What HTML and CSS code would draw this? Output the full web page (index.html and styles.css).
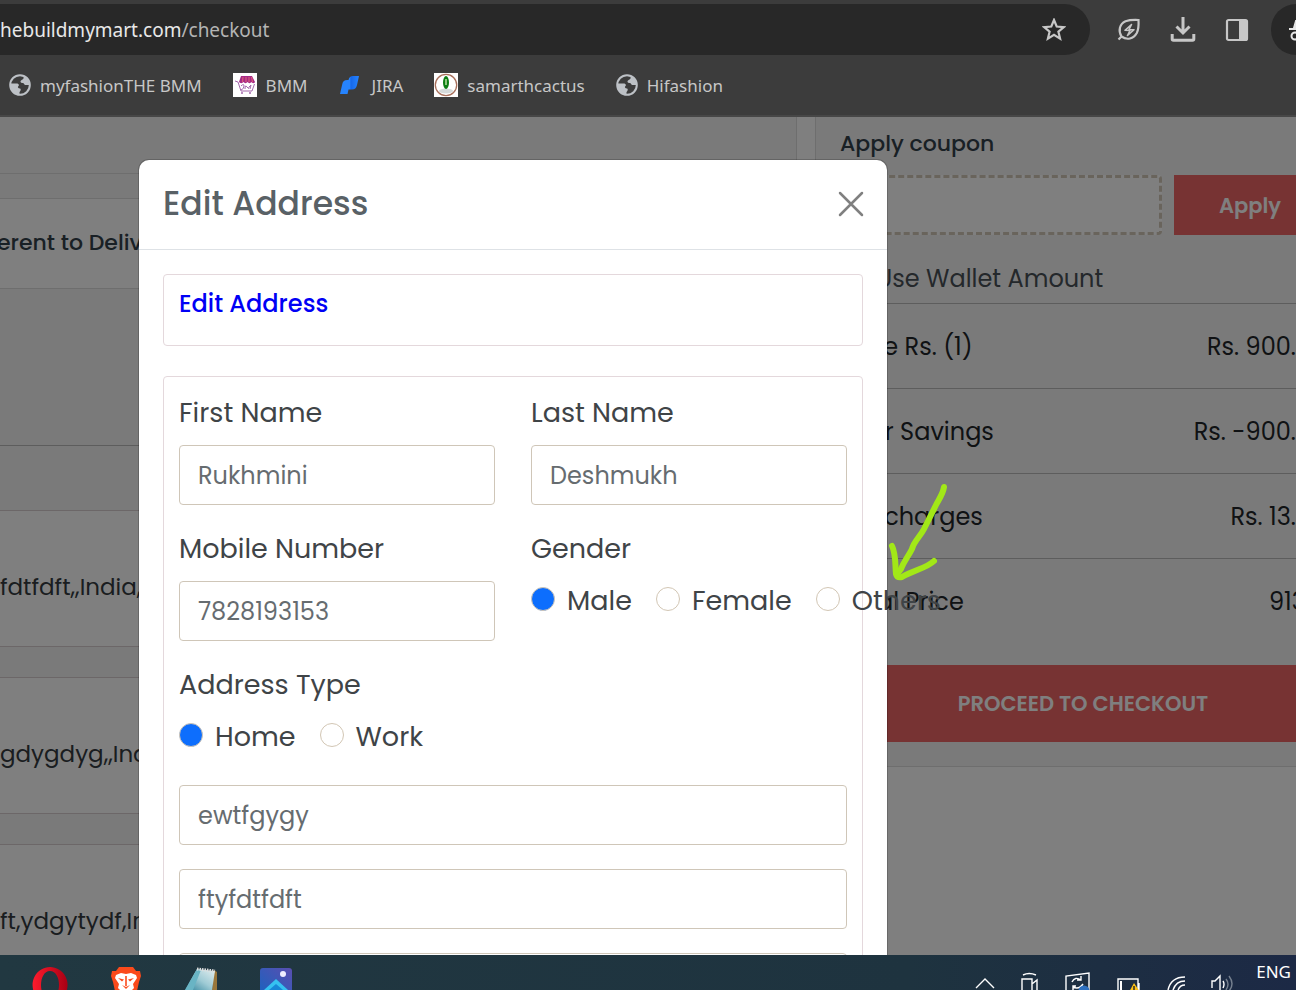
FILE: index.html
```html
<!DOCTYPE html>
<html lang="en">
<head>
  <meta charset="UTF-8">
  <meta name="viewport" content="width=device-width, initial-scale=1.0">
  <title>Checkout</title>
  <link rel="stylesheet" href="styles.css">
</head>
<body>
  <header class="browser">
    <div class="toolbar">
      <div class="omnibox">
        <span class="url">hebuildmymart.com<span class="path">/checkout</span></span>
        <button class="icon-btn" aria-label="Bookmark this page">
          <svg width="24" height="24" viewBox="0 0 24 24" fill="none" stroke="#c7c7c7" stroke-width="2.2"><path d="M12 2l2.700 6.500 7.100.6-5.400 4.600 1.700 6.900-6.100-3.700-6.100 3.700 1.700-6.900L2.200 9.100l7.100-.6z"/></svg>
        </button>
      </div>
      <div class="tools">
        <button class="icon-btn" aria-label="Energy saver">
          <svg width="24" height="24" viewBox="0 0 24 24" fill="none" stroke="#c7c7c7" stroke-width="2.200"><path d="M1.500 21.500L4.500 18.500C1 13 2.500 6 8.500 3.300c4-1.500 8.500-1.500 13-1.300.3 5 .3 9-1.700 13C16.500 21 10 22.500 4.500 18.500"/><path d="M14.500 6.500l-6.500 5.800 5 .2-2.500 5 6.500-5.800-5-.2z" stroke-width="1.600" stroke-linejoin="round"/></svg>
        </button>
        <button class="icon-btn" aria-label="Downloads">
          <svg width="26" height="26" viewBox="0 0 26 26" fill="none" stroke="#c7c7c7" stroke-width="3"><path d="M13 0v15M6.500 9.500L13 16l6.500-6.500M2.200 17v5q0 1.200 1.200 1.200h19.200q1.200 0 1.200-1.200v-5"/></svg>
        </button>
        <button class="icon-btn" aria-label="Side panel">
          <svg width="24" height="24" viewBox="0 0 24 24"><rect x="2" y="2" width="20" height="20" rx="1.500" fill="none" stroke="#c7c7c7" stroke-width="2.200"/><path d="M14 2h8v20h-8z" fill="#c7c7c7"/></svg>
        </button>
      </div>
      <div class="profile">
        <svg width="24" height="24" viewBox="0 0 24 24" fill="none" stroke="#e8e8e8" stroke-width="2"><path d="M0 11h24"/><path d="M5 10l2-7h10l2 7z" fill="#e8e8e8"/><circle cx="6" cy="18" r="3.500"/><circle cx="18" cy="18" r="3.500"/><path d="M9.500 17h5"/></svg>
      </div>
    </div>
    <nav class="bookmarks">
      <a href="#">
        <svg width="22" height="22" viewBox="0 0 22 22"><circle cx="11" cy="11" r="9.800" fill="none" stroke="#bdc1c6" stroke-width="2"/><path d="M14 2c4 1.200 6.500 5 6.500 9h-3.800c-2 0-1.200-2-3.200-2-2.200 0-2.500-1.500-1.500-2.400C13 5.500 16 5 14 2zM1.500 9.500h7c1.800.8 1.800 2 .8 2.700-1 .8-.3 2 1.700 2.300 1.400.3.500 3-.5 3.500V21C5 21 1 16 1.500 9.500z" fill="#bdc1c6"/></svg>
        myfashionTHE BMM
      </a>
      <a href="#">
        <svg width="24" height="24" viewBox="0 0 24 24"><path fill="#fff" d="M0 0h24v24H0z"/><path d="M8 3h11l3 6c-1 2-3 1-3.500 0-1 1.500-3 1.500-4 0-1 1.500-3 1.500-4 0-1 1.500-3.500 1.500-4.500 0z" fill="#a62a86"/><path d="M10 4l-.5 5M13 4v5M16 4v5M18.500 4l1 5" stroke="#d95c78" stroke-width="1.200"/><path d="M2 8l3 1 3 9h11l2.500-7M8 13q3-3 3 0t-3 4M12 16q0-5 2-2t2 0l2-2-1 4" fill="none" stroke="#a468ad" stroke-width="1"/><circle cx="9" cy="20" r="1" fill="#a468ad"/><circle cx="17" cy="20" r="1" fill="#a468ad"/></svg>
        BMM
      </a>
      <a href="#">
        <svg width="24" height="24" viewBox="0 0 24 24"><defs><linearGradient id="jira" x1="0" x2="1"><stop offset="0" stop-color="#2684ff"/><stop offset=".5" stop-color="#2684ff"/><stop offset=".58" stop-color="#1668ea"/><stop offset="1" stop-color="#2684ff"/></linearGradient></defs><path d="M2 21l2.300-10q.7-4 5-4h1.200q.8-4 4.500-4h6l-2 9q-1 4.500-5 4.500h-3.500l-1 4.500z" fill="url(#jira)"/></svg>
        JIRA
      </a>
      <a href="#">
        <svg width="24" height="24" viewBox="0 0 24 24"><path fill="#fff" d="M0 0h24v24H0z"/><circle cx="12" cy="12" r="10.700" fill="none" stroke="#a8705c" stroke-width="1.300"/><ellipse cx="12" cy="18" rx="7" ry="2.500" fill="#d5dada"/><ellipse cx="12" cy="9.500" rx="3" ry="6.500" fill="#0b7d12"/><path d="M12 6v6" stroke="#b8e0a0" stroke-width="1.500"/></svg>
        samarthcactus
      </a>
      <a href="#">
        <svg width="22" height="22" viewBox="0 0 22 22"><circle cx="11" cy="11" r="9.800" fill="none" stroke="#bdc1c6" stroke-width="2"/><path d="M14 2c4 1.200 6.500 5 6.500 9h-3.800c-2 0-1.200-2-3.200-2-2.200 0-2.500-1.500-1.500-2.400C13 5.500 16 5 14 2zM1.500 9.500h7c1.800.8 1.800 2 .8 2.700-1 .8-.3 2 1.700 2.300 1.400.3.500 3-.5 3.500V21C5 21 1 16 1.500 9.500z" fill="#bdc1c6"/></svg>
        Hifashion
      </a>
    </nav>
  </header>

  <main class="viewport">
    <div class="checkout">
      <section class="left">
        <div class="strip"></div>
        <div class="deliver"><h2>erent to Deliv</h2></div>
        <div class="tabs"></div>
        <div class="spacer"></div>
        <div class="address">fdtfdft,,India,</div>
        <div class="address">gdygdyg,,Ind</div>
        <div class="address">ft,ydgytydf,In</div>
      </section>

      <aside class="summary">
        <label class="coupon-label" for="coupon">Apply coupon</label>
        <div class="coupon">
          <input type="text" id="coupon">
          <button>Apply</button>
        </div>
        <div class="wallet">Use Wallet Amount</div>
        <dl>
          <div><dt>Price Rs. (1)</dt><dd>Rs. 900.00</dd></div>
          <div><dt>Your Savings</dt><dd>Rs. -900.00</dd></div>
          <div><dt>Del charges</dt><dd>Rs. 13.00</dd></div>
          <div><dt>Total Price</dt><dd>913.5</dd></div>
        </dl>
        <button class="proceed">PROCEED TO CHECKOUT</button>
      </aside>
    </div>

    <div class="backdrop"></div>

    <div class="modal" role="dialog" aria-labelledby="modalTitle">
      <div class="modal-header">
        <h1 id="modalTitle">Edit Address</h1>
        <button class="close" aria-label="Close">
          <svg width="26" height="26" viewBox="0 0 26 26" stroke="#808080" stroke-width="2.500" stroke-linecap="round"><path d="M2 2l22 22M24 2L2 24"/></svg>
        </button>
      </div>
      <div class="modal-body">
        <div class="box box-title"><a href="#">Edit Address</a></div>
        <form class="box box-form">
          <div class="grid">
            <div class="field">
              <label for="first">First Name</label>
              <input type="text" id="first" value="Rukhmini">
            </div>
            <div class="field">
              <label for="last">Last Name</label>
              <input type="text" id="last" value="Deshmukh">
            </div>
            <div class="field">
              <label for="mobile">Mobile Number</label>
              <input type="text" id="mobile" value="7828193153">
            </div>
            <div class="field" role="radiogroup" aria-labelledby="genderLabel">
              <span class="label" id="genderLabel">Gender</span>
              <div class="radios">
                <label><input type="radio" name="gender" checked>Male</label>
                <label><input type="radio" name="gender">Female</label>
                <label><input type="radio" name="gender">Others</label>
              </div>
            </div>
            <div class="field" role="radiogroup" aria-labelledby="typeLabel">
              <span class="label" id="typeLabel">Address Type</span>
              <div class="radios">
                <label><input type="radio" name="type" checked>Home</label>
                <label><input type="radio" name="type">Work</label>
              </div>
            </div>
          </div>
          <div class="lines">
            <input type="text" aria-label="Address line 1" value="ewtfgygy">
            <input type="text" aria-label="Address line 2" value="ftyfdtfdft">
            <input type="text" aria-label="Landmark">
          </div>
        </form>
      </div>
    </div>

    <svg class="arrow" width="70" height="106" viewBox="0 0 70 106" fill="none" stroke="#a2e817" stroke-width="6" stroke-linecap="round" stroke-linejoin="round"><path d="M60 6c-1 7-5 12-8 18L40 48c-4 8-10 12-12 20-4 8-8 12-11 20l-3 4"/><path d="M8 65c4 8 3 18 4 28q1 4 6 3c12-7 25-9 32-16"/></svg>
  </main>

  <footer class="taskbar">
    <div class="apps">
      <svg width="36" height="23" viewBox="0 0 36 23"><defs><linearGradient id="opera" x1="0" x2="1"><stop offset="0" stop-color="#ff1b2d"/><stop offset="1" stop-color="#a70014"/></linearGradient></defs><path fill-rule="evenodd" fill="url(#opera)" d="M18 0a17.500 18 0 1 0 .1 0zM18 4c6 0 9 7 9 14s-3 14-9 14-9-7-9-14 3-14 9-14z"/></svg>
      <svg width="32" height="23" viewBox="0 0 32 23"><path d="M9 0h14l3 4 4 0 1 5-2 6-2 9H5L3 15 1 9l1-5 4 0z" fill="#fb4a1b"/><path d="M6 8l5-2 5 1 5-1 5 2 1 3-4 6 1 4-4 4h-8l-4-4 1-4-4-6z" fill="#fff"/><path d="M8 11l6 1.500-2 2zM24 11l-6 1.500 2 2zM12 18l4 2 4-2-4 4zM15.200 9h1.600v10h-1.600z" fill="#fb4a1b"/></svg>
      <svg width="34" height="23" viewBox="0 0 34 23"><defs><linearGradient id="note" x1="0" y1="1" x2="1" y2="0"><stop offset="0" stop-color="#2c8199"/><stop offset=".5" stop-color="#9fcbd5"/><stop offset="1" stop-color="#e4eeef"/></linearGradient></defs><path d="M30 3l3 2v18h-5z" fill="#99763a"/><path d="M13 2l18 2-3 19H1z" fill="url(#note)"/><path d="M13 2L1 23h8l8-20z" fill="#69b4c4"/><path d="M13 2l18 2" stroke="#ddd" stroke-width="3" stroke-dasharray="1.500 1"/></svg>
      <svg width="32" height="23" viewBox="0 0 32 23"><defs><linearGradient id="photo" x1="0" y1="1" x2="1" y2="0"><stop offset="0" stop-color="#1764c0"/><stop offset="1" stop-color="#5a4eb0"/></linearGradient></defs><rect y="1" width="32" height="30" rx="3" fill="url(#photo)"/><circle cx="23" cy="7" r="3" fill="#eef"/><path d="M4 23l12-11 12 11z" fill="#35c1f1"/><path d="M9 23l7-6 7 6z" fill="#1787d8"/></svg>
    </div>
    <div class="tray">
      <svg width="20" height="23" viewBox="0 0 20 23" fill="none" stroke="#fff" stroke-width="1.400"><path d="M1 21l9-9 9 9"/></svg>
      <svg width="18" height="23" viewBox="0 0 18 23" fill="none" stroke="#fff" stroke-width="1.400"><path d="M2 8q6-3 13 0M1 25V12h10v14M11 17l5-4v12"/></svg>
      <svg width="26" height="23" viewBox="0 0 26 23" fill="none" stroke="#fff" stroke-width="1.400"><path d="M1 24V9l23-3v18M7 15q3-6 9-2M16 9v4h-4M18 17q-4 6-10 3M8 23v-4h3"/><circle cx="19" cy="24" r="5.500" fill="#2d70c0" stroke="none"/></svg>
      <svg width="24" height="23" viewBox="0 0 24 23" fill="none" stroke="#fff" stroke-width="1.400"><path d="M1 24V12h20v13M22 16v7"/><path d="M3 14h2v10H3z" fill="#fff" stroke="none"/><path d="M17 16l6 9H12z" fill="#fdc116" stroke="none"/><path d="M17 19v4" stroke="#222"/></svg>
      <svg width="18" height="23" viewBox="0 0 18 23" fill="none" stroke="#fff" stroke-width="1.400"><path d="M1 23Q4 10 18 10M6 23q3-9 12-9M11 23q2-5 7-5"/></svg>
      <svg width="24" height="23" viewBox="0 0 24 23" fill="none" stroke="#fff" stroke-width="1.400"><path d="M1 21v-7h3l5-5v15M12 14q2 3 0 7"/><path d="M15 12q4 5 0 11M18 9q6 8 0 15" stroke="#76808f"/></svg>
      <span class="lang">ENG</span>
    </div>
  </footer>
</body>
</html>
```
FILE: styles.css
```css
* {
  box-sizing: border-box;
}

body {
  margin: 0;
  height: 100vh;
  display: flex;
  flex-direction: column;
  overflow: hidden;
  font-family: Poppins, Inter, sans-serif;
  color: #212529;
}

button, input {
  font-family: inherit;
}

a {
  text-decoration: none;
}

svg {
  display: block;
  flex-shrink: 0;
}

/* browser chrome */
.browser {
  height: 117px;
  padding-top: 4px;
  background: #3c3c3c;
  border-bottom: 2px solid #474747;
  font-family: "Segoe UI", "Noto Sans", sans-serif;
  flex-shrink: 0;
}

.toolbar {
  display: flex;
  height: 51px;
}

.omnibox {
  flex: 1;
  display: flex;
  align-items: center;
  justify-content: space-between;
  padding-right: 24px;
  background: #282828;
  border-radius: 0 26px 26px 0;
}

.url {
  font-size: 19px;
  color: #e8e8e8;
}

.path {
  color: #b4b4b4;
}

.icon-btn {
  width: 24px;
  padding: 0;
  border: none;
  background: none;
  display: flex;
  justify-content: center;
}

.tools {
  display: flex;
  align-items: center;
  gap: 30px;
  padding: 0 22px 0 27px;
}

.profile {
  width: 25px;
  padding-left: 18px;
  display: flex;
  align-items: center;
  overflow: hidden;
  background: #282828;
  border-radius: 26px 0 0 26px;
}

.bookmarks {
  display: flex;
  align-items: center;
  gap: 31px;
  height: 60px;
  padding-left: 9px;
}

.bookmarks a {
  display: flex;
  align-items: center;
  gap: 9px;
  font-size: 17px;
  color: #c7c7c7;
}

/* checkout page */
.viewport {
  flex: 1;
  position: relative;
  overflow: hidden;
  background: #fff;
}

.checkout {
  display: grid;
  grid-template-columns: minmax(0, 1fr) 536px;
  gap: 18px;
  align-items: start;
  margin-right: -55px;
}

.left {
  background: #f5f5f5;
  border-right: 1px solid #dcdcdc;
}

.strip {
  height: 57px;
  border-bottom: 1px solid #dcdcdc;
  margin-bottom: 24px;
}

.deliver {
  height: 91px;
  display: flex;
  align-items: center;
  background: #fff;
  border-top: 1px solid #dcdcdc;
  border-bottom: 1px solid #dcdcdc;
}

.deliver h2 {
  margin: 0 0 2px -3px;
  font-size: 22px;
  font-weight: 500;
  color: #33414a;
}

.tabs {
  height: 157px;
  border-bottom: 1px solid #bbb;
}

.spacer {
  height: 64px;
}

.address {
  height: 137px;
  margin-bottom: 30px;
  padding-top: 59px;
  background: #fff;
  border-top: 1px solid #d9cfd1;
  border-bottom: 1px solid #d9cfd1;
  font-size: 23px;
  line-height: 34px;
  color: #343a40;
}

.summary {
  padding: 9px 25px 24px 24px;
  background: #f5f5f5;
  border-left: 1px solid #dcdcdc;
  border-bottom: 1px solid #dcdcdc;
}

.coupon-label {
  display: block;
  font-size: 22px;
  line-height: 36px;
  font-weight: 500;
  color: #33414a;
}

.coupon {
  display: flex;
  gap: 12px;
  margin-top: 13px;
}

.coupon input {
  flex: 1;
  min-width: 0;
  height: 60px;
  background: #fff;
  border: 3px dashed #d2c8b8;
  border-radius: 4px;
}

.coupon button {
  width: 152px;
  border: none;
  background: #ee6666;
  color: #fff;
  font-size: 21px;
  font-weight: 600;
}

.wallet {
  height: 68px;
  padding-top: 27px;
  padding-left: 36px;
  font-size: 24px;
  line-height: 34px;
  color: #495057;
}

dl {
  margin: 0;
}

dl div {
  display: flex;
  justify-content: space-between;
  align-items: center;
  height: 85px;
  border-top: 1px solid #bbb;
  font-size: 24px;
}

dd {
  margin: 0;
}

.proceed {
  width: 100%;
  height: 77px;
  margin-top: 22px;
  border: none;
  background: #ee6666;
  color: #fff;
  font-size: 21px;
  font-weight: 600;
}

.backdrop {
  position: absolute;
  inset: 0;
  background: rgba(0, 0, 0, 0.5);
}

/* edit address modal */
.modal {
  position: absolute;
  top: 43px;
  left: 139px;
  width: 748px;
  background: #fff;
  border-radius: 10px;
  box-shadow: 0 0 0 1px rgba(0, 0, 0, 0.18);
}

.modal-header {
  display: flex;
  align-items: center;
  justify-content: space-between;
  height: 90px;
  padding: 0 23px 2px 24px;
  border-bottom: 1px solid #dee2e6;
}

.modal-header h1 {
  margin: 0;
  font-size: 33px;
  font-weight: 500;
  color: #596166;
}

.close {
  padding: 0;
  border: none;
  background: none;
}

.modal-body {
  padding: 24px;
}

.box {
  border: 1px solid #e4d8dc;
  border-radius: 4px;
  padding: 14px 15px;
}

.box-title {
  height: 72px;
  margin-bottom: 30px;
}

.box-title a {
  font-size: 24px;
  line-height: 30px;
  font-weight: 500;
  color: #0000f5;
}

.grid {
  display: grid;
  grid-template-columns: repeat(2, minmax(0, 1fr));
  gap: 22px 36px;
}

.field > label,
.label {
  display: block;
  margin-bottom: 10px;
  font-size: 27px;
  line-height: 44px;
  color: #3f4447;
}

.box-form input[type="text"] {
  display: block;
  width: 100%;
  height: 60px;
  padding: 0 18px;
  border: 1px solid #cfc6b8;
  border-radius: 4px;
  background: #fff;
  font-size: 24px;
  color: #666c70;
}

.radios {
  display: flex;
  gap: 24px;
}

.radios label {
  display: flex;
  align-items: center;
  gap: 12px;
  font-size: 27px;
  line-height: 40px;
  color: #3f4447;
}

.radios input {
  appearance: none;
  flex-shrink: 0;
  width: 24px;
  height: 24px;
  margin: 0 0 4px;
  border: 1px solid #d2c6b4;
  border-radius: 50%;
  background: #fff;
}

.radios input:checked {
  background: #0d6efd;
}

.lines {
  display: grid;
  gap: 24px;
  margin-top: 28px;
}

.arrow {
  position: absolute;
  top: 364px;
  left: 884px;
}

/* windows taskbar */
.taskbar {
  display: flex;
  justify-content: space-between;
  align-items: flex-end;
  height: 35px;
  overflow: hidden;
  background: linear-gradient(to right, #213841, #1e333f 70%, #1c2945);
  font-family: "Segoe UI", "Noto Sans", sans-serif;
  flex-shrink: 0;
}

.apps {
  display: flex;
  gap: 42px;
  padding-left: 32px;
}

.tray {
  display: flex;
  align-items: flex-end;
  gap: 26px;
  padding-right: 5px;
}

.lang {
  height: 30px;
  margin-left: -5px;
  font-size: 17px;
  line-height: 24px;
  color: #fff;
}
```
